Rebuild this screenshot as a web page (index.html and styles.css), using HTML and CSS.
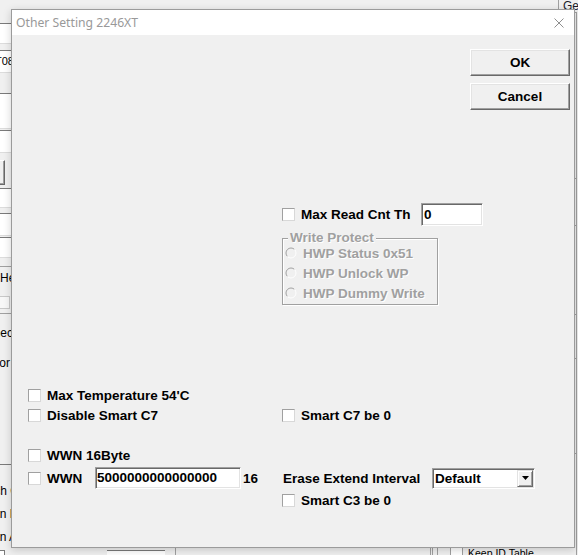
FILE: index.html
```html
<!DOCTYPE html>
<html lang="en">
<head>
    <meta charset="UTF-8">
    <meta name="viewport" content="width=device-width, initial-scale=1.0">
    <title>Other Setting 2246XT</title>
    <link rel="stylesheet" href="styles.css">
</head>
<body>

    <!-- main tool window, sitting behind the dialog -->
    <div class="app">
        <div class="app-left">
            <div class="fld fld-port"></div>
            <div class="fld fld-serial">T08</div>
            <div class="fld fld-model"></div>
            <div class="fld fld-fw"></div>
            <div class="app-btn"></div>
            <div class="fld fld-cap"></div>
            <div class="fld fld-ce"></div>
            <div class="fld fld-die"></div>
            <div class="sep sep-top"></div>
            <div class="lbl lbl-hex">Hex Data</div>
            <div class="app-box"></div>
            <div class="sep sep-mid"></div>
            <div class="lbl lbl-check">Check</div>
            <div class="lbl lbl-vendor">Vendor</div>
            <div class="sep sep-low"></div>
            <div class="lbl lbl-search">Search Count</div>
            <div class="lbl lbl-delay">Scan Delay</div>
            <div class="lbl lbl-after">Scan After</div>
            <div class="app-foot">
                <span class="app-chk"></span>
                <span class="fld app-edit"></span>
            </div>
        </div>
        <div class="app-mid">
            <div class="mid-foot"></div>
        </div>
        <div class="app-right">
            <div class="tabs"><span class="tab">General</span></div>
            <div class="panel">
                <div class="panel-inner">
                    <div class="pl pl-a"></div>
                    <div class="pl pl-b"></div>
                    <div class="pl pl-c"></div>
                    <div class="pl pl-d"></div>
                    <div class="pl pl-e"></div>
                    <div class="keep"><span class="app-chk2"></span>Keep ID Table</div>
                </div>
            </div>
        </div>
    </div>

    <div class="dialog">
        <div class="titlebar">
            <span class="title">Other Setting 2246XT</span>
            <svg class="close" width="10" height="10" viewBox="0 0 10 10">
                <path d="M0.5 0.5L9.5 9.5M9.5 0.5L0.5 9.5" stroke="#8f8f8f" stroke-width="1" fill="none"/>
            </svg>
        </div>

        <div class="client">
            <div class="actions">
                <button class="btn">OK</button>
                <button class="btn">Cancel</button>
            </div>

            <div class="row row-read">
                <div class="col-left"></div>
                <div class="col-right">
                    <label class="check check-read"><span class="box"></span>Max Read Cnt Th</label>
                    <span class="edit edit-read">0</span>
                </div>
            </div>

            <div class="row row-group">
                <div class="col-left"></div>
                <div class="col-right">
                    <div class="group">
                        <span class="group-label">Write Protect</span>
                        <label class="radio">
                            <svg width="12" height="12" viewBox="0 0 12 12">
                                <circle cx="6" cy="6" r="5" fill="#f0f0f0"/>
                                <path d="M2.46 9.54A5 5 0 0 1 9.54 2.46" stroke="#a0a0a0" fill="none"/>
                                <path d="M9.54 2.46A5 5 0 0 1 2.46 9.54" stroke="#fff" fill="none"/>
                            </svg>
                            HWP Status 0x51
                        </label>
                        <label class="radio">
                            <svg width="12" height="12" viewBox="0 0 12 12">
                                <circle cx="6" cy="6" r="5" fill="#f0f0f0"/>
                                <path d="M2.46 9.54A5 5 0 0 1 9.54 2.46" stroke="#a0a0a0" fill="none"/>
                                <path d="M9.54 2.46A5 5 0 0 1 2.46 9.54" stroke="#fff" fill="none"/>
                            </svg>
                            HWP Unlock WP
                        </label>
                        <label class="radio">
                            <svg width="12" height="12" viewBox="0 0 12 12">
                                <circle cx="6" cy="6" r="5" fill="#f0f0f0"/>
                                <path d="M2.46 9.54A5 5 0 0 1 9.54 2.46" stroke="#a0a0a0" fill="none"/>
                                <path d="M9.54 2.46A5 5 0 0 1 2.46 9.54" stroke="#fff" fill="none"/>
                            </svg>
                            HWP Dummy Write
                        </label>
                    </div>
                </div>
            </div>

            <div class="row row-temp">
                <div class="col-left">
                    <label class="check"><span class="box"></span>Max Temperature 54'C</label>
                </div>
            </div>

            <div class="row">
                <div class="col-left">
                    <label class="check"><span class="box"></span>Disable Smart C7</label>
                </div>
                <div class="col-right">
                    <label class="check"><span class="box"></span>Smart C7 be 0</label>
                </div>
            </div>

            <div class="row row-wwn16">
                <div class="col-left">
                    <label class="check"><span class="box"></span>WWN 16Byte</label>
                </div>
            </div>

            <div class="row row-wwn">
                <div class="col-left">
                    <label class="check check-wwn"><span class="box"></span>WWN</label>
                    <span class="edit edit-wwn">5000000000000000</span>
                    <span class="suffix">16</span>
                </div>
                <div class="col-right">
                    <span class="erase-label">Erase Extend Interval</span>
                    <div class="combo">
                        <span class="combo-text">Default</span>
                        <span class="combo-btn">
                            <svg width="7" height="4" viewBox="0 0 7 4"><path d="M0 0H7L3.5 4Z" fill="#000"/></svg>
                        </span>
                    </div>
                </div>
            </div>

            <div class="row row-c3">
                <div class="col-left"></div>
                <div class="col-right">
                    <label class="check"><span class="box"></span>Smart C3 be 0</label>
                </div>
            </div>
        </div>
    </div>

</body>
</html>
```

FILE: styles.css
```css
* {
    margin: 0;
    padding: 0;
    box-sizing: border-box;
}

body {
    width: 578px;
    height: 555px;
    overflow: hidden;
    position: relative;
    background-color: #f0f0f0;
    font-family: "Liberation Sans", Arial, sans-serif;
}

/* ---- window behind ---- */

.app {
    display: grid;
    grid-template-columns: 175px 255px 1fr;
    grid-template-rows: 555px;
    height: 555px;
    font-size: 12px;
    color: #000;
}

.app-left {
    display: flex;
    flex-direction: column;
}

.app-left > * {
    flex-shrink: 0;
}

.fld {
    background-color: #fff;
    border-top: 1px solid #7a7a7a;
    border-bottom: 1px solid #dcdcdc;
}

.fld-port { margin-top: 23px; height: 21px; }
.fld-serial { margin-top: 6px; height: 23px; line-height: 21px; font-size: 11px; text-indent: -5px; }
.fld-model { margin-top: 20px; height: 36px; }
.fld-fw { margin-top: 1px; height: 23px; }
.fld-cap { margin-top: 3px; height: 20px; }
.fld-ce { margin-top: 5px; height: 23px; }
.fld-die { margin-top: 1px; height: 21px; }

.app-btn {
    margin: 7px 0 0 -40px;
    width: 45px;
    height: 25px;
    border: 1px solid;
    border-color: #fff #696969 #696969 #fff;
    box-shadow: inset -1px -1px #a0a0a0;
}

.sep {
    height: 1px;
    background-color: #a0a0a0;
}

.sep-top { margin-top: 8px; }
.sep-mid { margin-top: 4px; }
.sep-low { margin-top: 94px; background-color: #7a7a7a; }

.lbl {
    line-height: 14px;
    white-space: nowrap;
}

.lbl-hex { margin-top: 4px; }
.lbl-check { margin-top: 12px; text-indent: -15px; }
.lbl-vendor { margin-top: 16px; text-indent: -28px; }
.lbl-search { margin-top: 19px; text-indent: -31px; }
.lbl-delay { margin-top: 9px; text-indent: -21px; }
.lbl-after { margin-top: 9px; text-indent: -21px; }

.app-box {
    margin: 11px 0 0 -20px;
    width: 30px;
    height: 13px;
    border: 1px solid #c8c8c8;
    background-color: #f7f7f7;
}

.app-foot {
    margin-top: 6px;
    height: 20px;
    display: flex;
}

.app-chk {
    margin-left: -8px;
    width: 13px;
    height: 13px;
    border: 1px solid #7a7a7a;
    background-color: #fff;
}

.app-edit {
    margin-left: 102px;
    width: 58px;
    height: 20px;
}

.app-mid {
    display: flex;
    flex-direction: column;
    justify-content: flex-end;
}

.mid-foot {
    height: 10px;
    border-left: 1px solid #a0a0a0;
}

.app-right {
    display: flex;
    flex-direction: column;
    min-width: 0;
}

.tabs {
    height: 12px;
    display: flex;
    justify-content: flex-end;
    flex-shrink: 0;
}

.tab {
    width: 20px;
    border-left: 1px solid #a0a0a0;
    padding-left: 4px;
    line-height: 12px;
    white-space: nowrap;
    overflow: hidden;
    color: #1a1a2a;
}

.panel {
    flex: 1;
    display: flex;
    margin-right: 1px;
    border-left: 3px double #a0a0a0;
    border-top: 1px solid #a0a0a0;
    border-right: 1px solid #a0a0a0;
}

.panel-inner {
    flex: 1;
    margin-left: 4px;
    border-left: 1px solid #a0a0a0;
    display: flex;
    flex-direction: column;
}

.pl {
    height: 1px;
    background-color: #a0a0a0;
    flex-shrink: 0;
}

.pl-a { margin-top: 165px; }
.pl-b { margin-top: 46px; }
.pl-c { margin-top: 88px; }
.pl-d { margin-top: 43px; }
.pl-e { margin-top: 94px; }

.keep {
    margin: auto 0 -6px 12px;
    height: 16px;
    display: flex;
    align-items: center;
    gap: 5px;
    font-size: 10.5px;
    white-space: nowrap;
}

.app-chk2 {
    width: 13px;
    height: 13px;
    border: 1px solid #a0a0a0;
    background-color: #fff;
}

/* ---- dialog ---- */

.dialog {
    position: absolute;
    left: 11px;
    top: 9px;
    width: 564px;
    height: 539px;
    border: 1px solid #9b9b9b;
    background-color: #f0f0f0;
    box-shadow: 0 2px 8px rgba(0, 0, 0, .18);
    display: flex;
    flex-direction: column;
}

.titlebar {
    height: 25px;
    flex-shrink: 0;
    background-color: #fff;
    display: flex;
    align-items: center;
    padding-left: 4px;
}

.title {
    font-family: "Noto Sans", sans-serif;
    font-size: 12.2px;
    color: #999;
}

.close {
    margin-left: auto;
    margin-right: 10px;
}

.client {
    flex: 1;
    padding: 14px 4px 0 16px;
    display: flex;
    flex-direction: column;
    font: bold 13.5px "Liberation Sans", Arial, sans-serif;
    color: #000;
}

.actions {
    align-self: flex-end;
    display: flex;
    flex-direction: column;
    gap: 7px;
}

.btn {
    width: 100px;
    height: 27px;
    border: 1px solid;
    border-color: #fff #696969 #696969 #fff;
    box-shadow: inset -1px -1px #a0a0a0, inset 1px 1px #e3e3e3;
    background-color: #f0f0f0;
    font: inherit;
    color: #000;
}

.row {
    display: flex;
    align-items: center;
    height: 20px;
    flex-shrink: 0;
}

.col-left {
    width: 254px;
    flex-shrink: 0;
    display: flex;
    align-items: center;
}

.col-right {
    display: flex;
    align-items: center;
}

.row-read { margin-top: 93px; height: 23px; }
.row-group { margin-top: 12px; height: auto; align-items: flex-start; }
.row-temp { margin-top: 80px; }
.row-wwn16 { margin-top: 20px; }
.row-wwn { margin-top: 2px; height: 22px; }
.row-c3 { margin-top: 1px; }

.check {
    display: flex;
    align-items: center;
    height: 20px;
    white-space: nowrap;
}

.box {
    width: 13px;
    height: 13px;
    margin-right: 6px;
    flex-shrink: 0;
    background-color: #fff;
    border: 1px solid;
    border-color: #a0a0a0 #d8d8d8 #d8d8d8 #a0a0a0;
}

.check-read { width: 139px; }
.check-wwn { width: 67px; }

.edit {
    display: block;
    background-color: #fff;
    border: 1px solid;
    border-color: #a0a0a0 #fff #fff #a0a0a0;
    box-shadow: inset 1px 1px #696969, inset -1px -1px #e3e3e3;
    white-space: nowrap;
}

.edit-read {
    width: 62px;
    height: 23px;
    padding-left: 2px;
    line-height: 21px;
}

.edit-wwn {
    width: 146px;
    height: 22px;
    padding-left: 1px;
    line-height: 20px;
}

.suffix {
    margin-left: 2px;
}

.group {
    width: 156px;
    border: 1px solid #a0a0a0;
    box-shadow: 1px 1px 0 #fff, inset 1px 1px 0 #fff;
    padding-bottom: 1px;
    color: #a0a0a0;
    text-shadow: 1px 1px 0 #fff;
}

.group-label {
    display: block;
    width: fit-content;
    margin: -8px 0 -2px 5px;
    padding: 0 2px;
    line-height: 14px;
    background-color: #f0f0f0;
}

.radio {
    display: flex;
    align-items: center;
    height: 20px;
    padding-left: 2px;
    white-space: nowrap;
}

.radio svg {
    margin-right: 6px;
    flex-shrink: 0;
}

.erase-label {
    width: 150px;
    padding-left: 1px;
    white-space: nowrap;
}

.combo {
    width: 103px;
    height: 21px;
    padding: 1px;
    display: flex;
    align-items: center;
    background-color: #fff;
    border: 1px solid;
    border-color: #a0a0a0 #fff #fff #a0a0a0;
    box-shadow: inset 1px 1px #696969, inset -1px -1px #e3e3e3;
}

.combo-text {
    flex: 1;
    padding-left: 1px;
}

.combo-btn {
    width: 16px;
    height: 17px;
    display: flex;
    align-items: center;
    justify-content: center;
    background-color: #f0f0f0;
    border: 1px solid;
    border-color: #e3e3e3 #696969 #696969 #e3e3e3;
    box-shadow: inset 1px 1px #fff, inset -1px -1px #a0a0a0;
}
```
